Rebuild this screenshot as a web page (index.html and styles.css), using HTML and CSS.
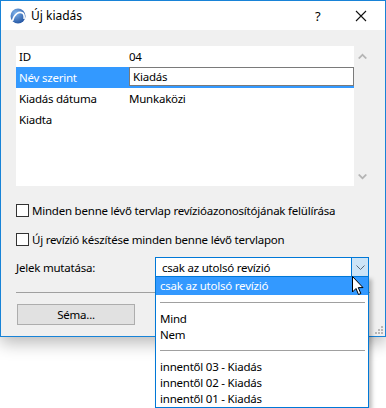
FILE: index.html
```html
<!DOCTYPE html>
<html lang="hu">
<head>
  <meta charset="UTF-8">
  <title>Új kiadás</title>
  <link rel="stylesheet" href="styles.css">
</head>
<body>
  <div class="window">
    <div class="titlebar">
      <svg class="app-icon" width="16" height="16" viewBox="0 0 16 16">
        <defs>
          <radialGradient id="g" cx="0.35" cy="0.3" r="0.8">
            <stop offset="0" stop-color="#7fb2ea"/>
            <stop offset="1" stop-color="#1d4f9e"/>
          </radialGradient>
        </defs>
        <circle cx="8" cy="8" r="7.5" fill="url(#g)"/>
        <path d="M2.5 13 C4 6 9 3 12.5 5 C14 6 14.5 8 14 11" fill="none" stroke="#fff" stroke-width="1.6"/>
      </svg>
      <span class="title">Új kiadás</span>
      <span class="help">?</span>
      <svg class="close" width="12" height="12" viewBox="0 0 12 12">
        <path d="M1 1 L11 11 M11 1 L1 11" stroke="#111" stroke-width="1.1"/>
      </svg>
    </div>

    <div class="content">
      <div class="list-wrap">
        <div class="list">
          <div class="row"><span class="key">ID</span><span class="val">04</span></div>
          <div class="row selected"><span class="key">Név szerint</span><span class="edit">Kiadás</span></div>
          <div class="row"><span class="key">Kiadás dátuma</span><span class="val">Munkaközi</span></div>
          <div class="row"><span class="key">Kiadta</span><span class="val"></span></div>
        </div>
        <div class="scrollbar">
          <svg width="9" height="6" viewBox="0 0 9 6"><path d="M0 5 L4.5 0.5 L9 5 L7.5 6 L4.5 3 L1.5 6 Z" fill="#b4b4b4"/></svg>
          <svg width="9" height="6" viewBox="0 0 9 6"><path d="M0 1 L4.5 5.5 L9 1 L7.5 0 L4.5 3 L1.5 0 Z" fill="#b4b4b4"/></svg>
        </div>
      </div>

      <label class="check"><span class="box"></span>Minden benne lévő tervlap revízióazonosítójának felülírása</label>
      <label class="check second"><span class="box"></span>Új revízió készítése minden benne lévő tervlapon</label>

      <div class="combo-row">
        <span class="combo-label">Jelek mutatása:</span>
        <div class="combo">
          <span class="combo-text">csak az utolsó revízió</span>
          <span class="combo-btn">
            <svg width="9" height="5" viewBox="0 0 9 5"><path d="M0.5 0.5 L4.5 4.5 L8.5 0.5" fill="none" stroke="#5a6a7a" stroke-width="1"/></svg>
          </span>
        </div>
      </div>

      <div class="divider"></div>

      <button class="btn">Séma...</button>

      <div class="grip">
        <i></i><i></i><i></i><i></i><i></i><i></i>
      </div>
    </div>
  </div>

  <div class="dropdown">
    <div class="item active">csak az utolsó revízió</div>
    <div class="sep"></div>
    <div class="item">Mind</div>
    <div class="item">Nem</div>
    <div class="sep"></div>
    <div class="item">innentől 03 - Kiadás</div>
    <div class="item">innentől 02 - Kiadás</div>
    <div class="item">innentől 01 - Kiadás</div>
  </div>

  <svg class="cursor" width="12" height="20" viewBox="0 0 12 20">
    <path d="M0.5 0.5 L0.5 16 L4 12.5 L6.5 18.5 L8.8 17.5 L6.3 11.6 L11 11.6 Z" fill="#fff" stroke="#000" stroke-width="1"/>
  </svg>
</body>
</html>
```

FILE: styles.css
```css
body {
  margin: 0;
  background: #fff;
  font-family: "Noto Sans", "Open Sans", sans-serif;
  font-size: 11.5px;
  letter-spacing: -0.22px;
  color: #000;
  width: 386px;
  height: 408px;
  position: relative;
  overflow: hidden;
}

.window {
  width: 386px;
  height: 337px;
  box-sizing: border-box;
  border: 1px solid #1883d7;
  background: #f0f0f0;
  box-shadow: 0 6px 16px rgba(0, 0, 0, 0.28);
  display: flex;
  flex-direction: column;
}

.titlebar {
  height: 29px;
  background: #fff;
  display: flex;
  align-items: center;
  padding-left: 9px;
}

.app-icon {
  margin-right: 5px;
}

.title {
  flex: 1;
  font-size: 12px;
  letter-spacing: 0;
}

.help {
  width: 20px;
  margin-right: 20px;
  font-size: 13px;
}

.close {
  margin-right: 18px;
}

.content {
  flex: 1;
  padding: 16px 15px 0 15px;
  position: relative;
}

.list-wrap {
  display: flex;
  height: 140px;
}

.list {
  width: 338px;
  background: #fff;
}

.row {
  height: 21px;
  display: flex;
  align-items: center;
}

.row .key {
  width: 110px;
  padding-left: 3px;
}

.row.selected {
  background: #3399ff;
  color: #fff;
  align-items: flex-start;
}

.row.selected .key {
  line-height: 21px;
}

.edit {
  flex: 1;
  height: 19px;
  box-sizing: border-box;
  border: 1px solid #7a7a7a;
  background: #fff;
  color: #000;
  padding-left: 3px;
  line-height: 17px;
}

.scrollbar {
  width: 16px;
  display: flex;
  flex-direction: column;
  align-items: center;
  justify-content: space-between;
  padding: 7px 0 6px;
  box-sizing: border-box;
}

.check {
  display: flex;
  align-items: center;
  margin-top: 17px;
  height: 14px;
}

.check.second {
  margin-top: 15px;
}

.box {
  width: 11px;
  height: 11px;
  border: 1px solid #333;
  background: #fff;
  margin-right: 3px;
}

.combo-row {
  display: flex;
  align-items: center;
  margin-top: 11px;
}

.combo-label {
  width: 139px;
}

.combo {
  width: 214px;
  height: 21px;
  box-sizing: border-box;
  border: 1px solid #0078d7;
  background: #fff;
  display: flex;
  align-items: center;
}

.combo-text {
  flex: 1;
  padding-left: 6px;
}

.combo-btn {
  width: 16px;
  height: 19px;
  background: #cce4f7;
  border-left: 1px solid #0078d7;
  display: flex;
  align-items: center;
  justify-content: center;
}

.divider {
  height: 1px;
  background: #a0a0a0;
  margin-top: 14px;
  width: 354px;
}

.btn {
  display: block;
  margin: 11px 0 0 1px;
  width: 118px;
  height: 21px;
  border: 1px solid #adadad;
  background: #e1e1e1;
  font-family: inherit;
  font-size: inherit;
  letter-spacing: inherit;
  padding: 0;
}

.grip {
  position: absolute;
  right: 2px;
  bottom: 2px;
  width: 10px;
  height: 10px;
}

.grip i {
  position: absolute;
  width: 2px;
  height: 2px;
  background: #b8b8b8;
}

.grip i:nth-child(1) { right: 0; bottom: 0; }
.grip i:nth-child(2) { right: 3px; bottom: 0; }
.grip i:nth-child(3) { right: 6px; bottom: 0; }
.grip i:nth-child(4) { right: 0; bottom: 3px; }
.grip i:nth-child(5) { right: 3px; bottom: 3px; }
.grip i:nth-child(6) { right: 0; bottom: 6px; }

.dropdown {
  position: absolute;
  left: 155px;
  top: 276px;
  width: 214px;
  height: 132px;
  box-sizing: border-box;
  border: 1px solid #0078d7;
  background: #fff;
  box-shadow: 3px 3px 4px rgba(0, 0, 0, 0.25);
}

.item {
  height: 16px;
  line-height: 16px;
  padding-left: 4px;
}

.item.active {
  height: 18px;
  line-height: 18px;
  background: #3399ff;
  color: #fff;
}

.sep {
  height: 1px;
  background: #a0a0a0;
  margin: 7px 3px 8px 4px;
}

.cursor {
  position: absolute;
  left: 352px;
  top: 276px;
}
```
